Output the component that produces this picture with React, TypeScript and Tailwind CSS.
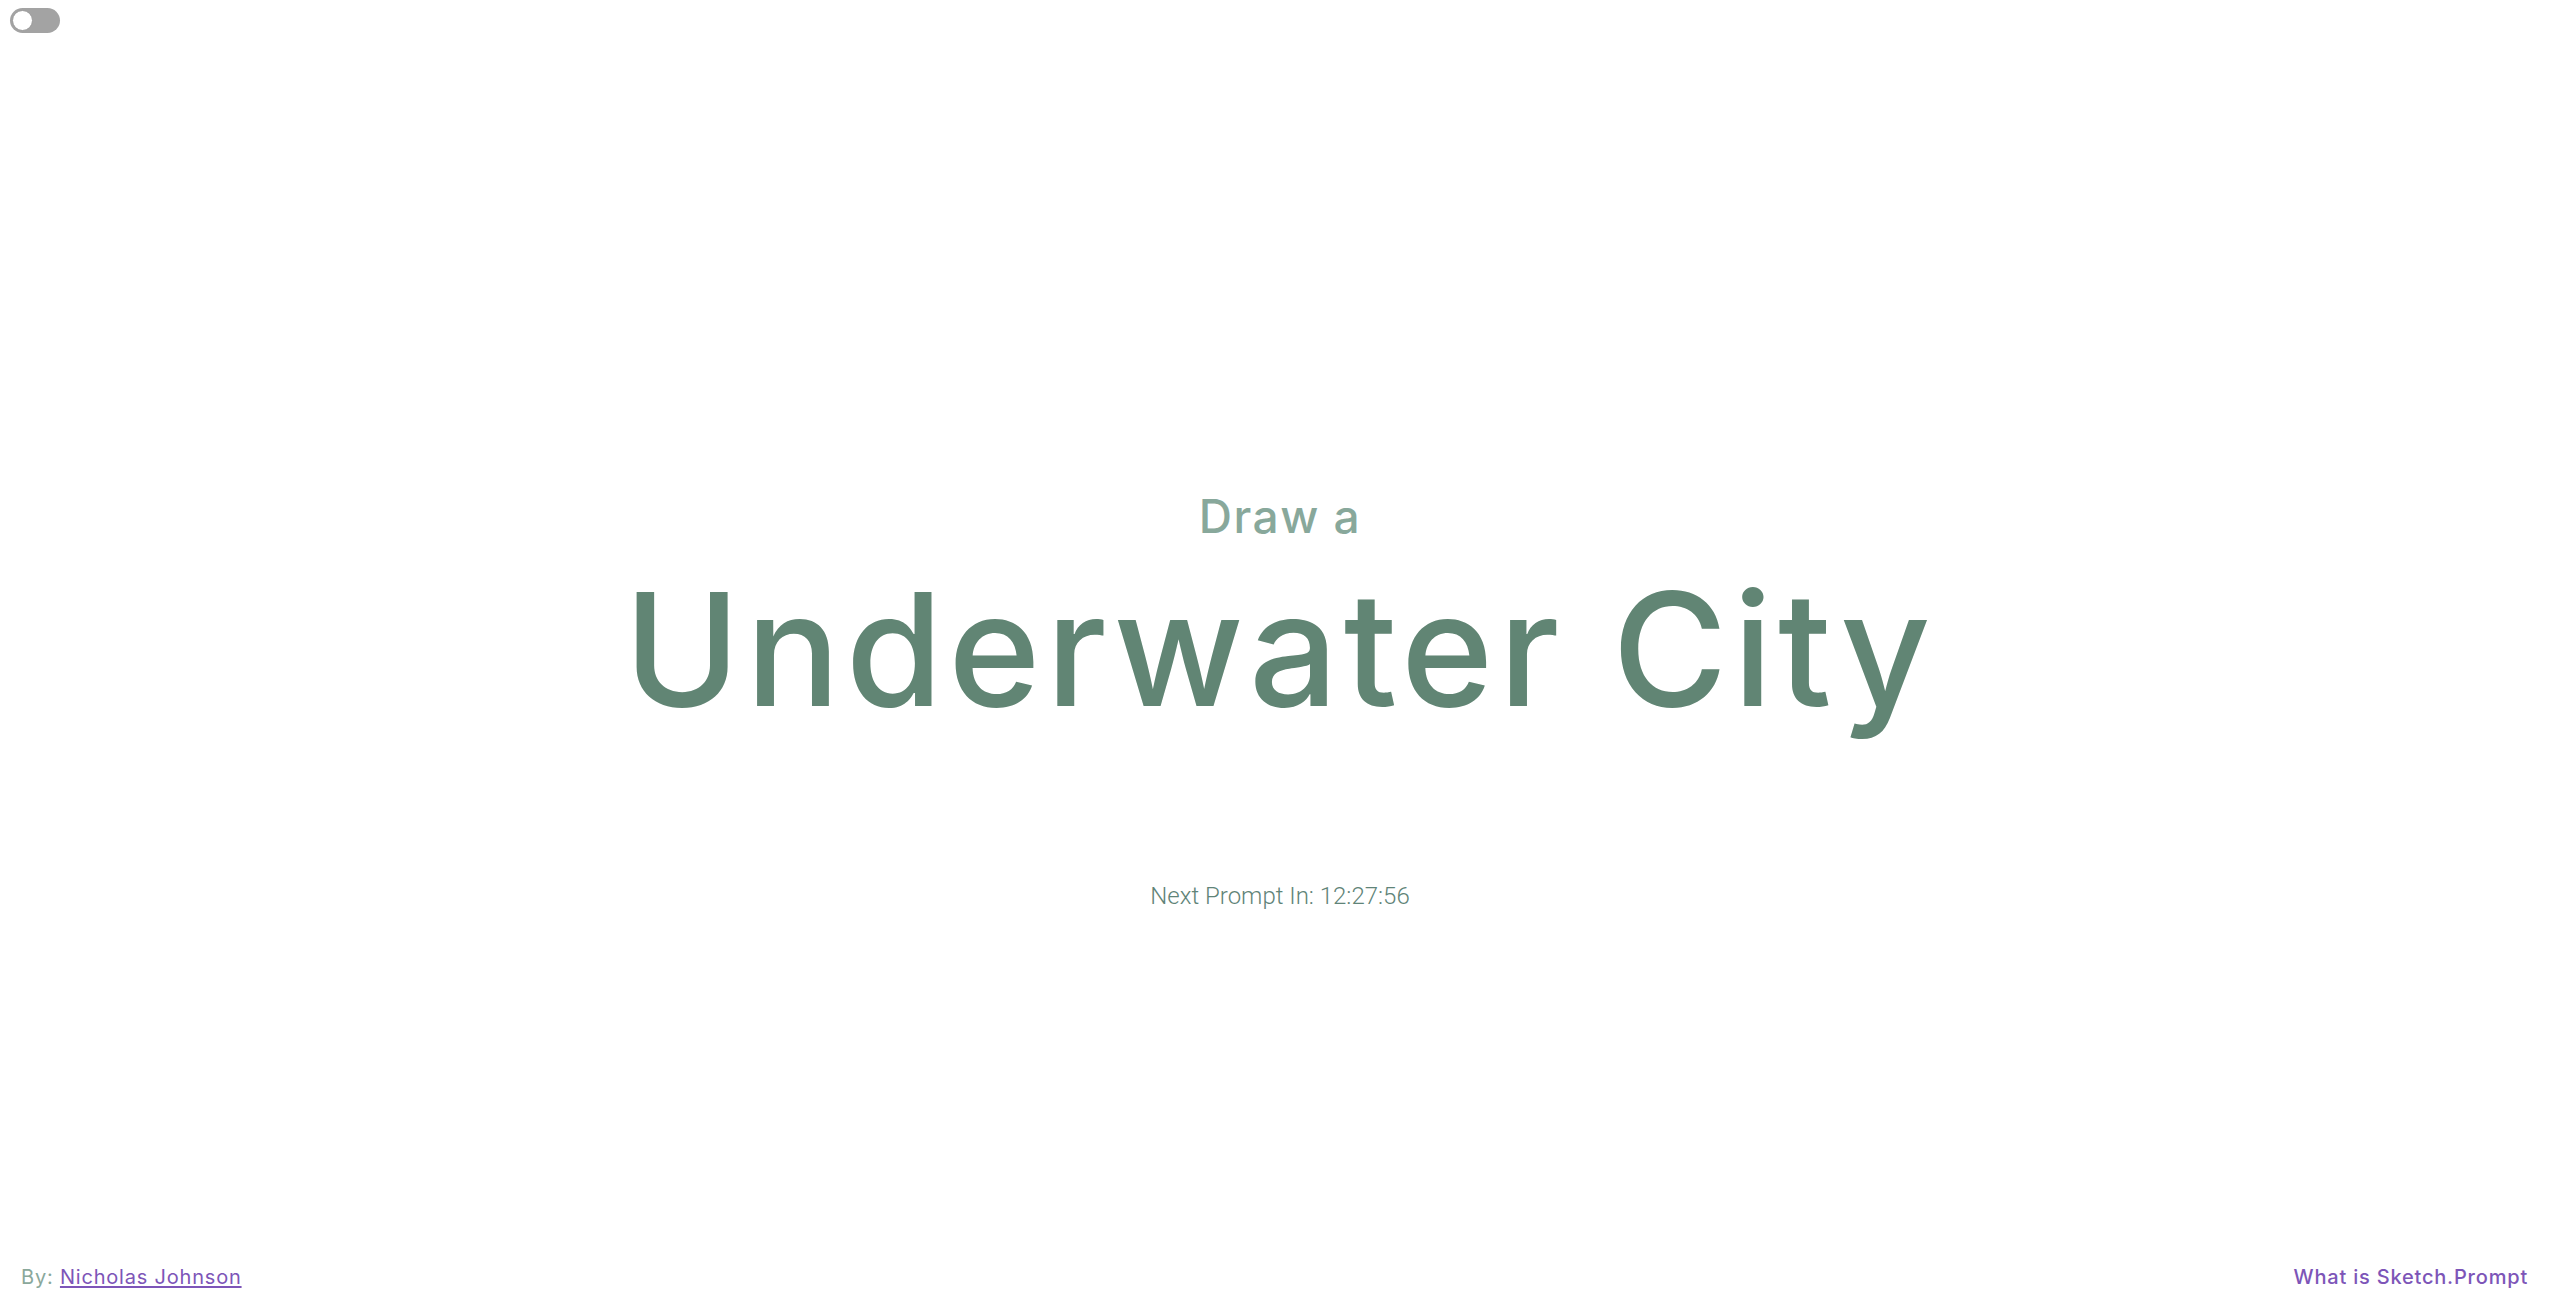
import { useState } from "react";

export default function App() {
  const [dark, setDark] = useState(false);

  return (
    <div className="flex min-h-screen flex-col bg-white font-['Inter',sans-serif]">
      <header className="px-[10px] pt-[8px]">
        <button
          onClick={() => setDark(!dark)}
          className="flex h-[25px] w-[50px] items-center rounded-full bg-[#a3a3a3] p-[2px]"
          aria-label="Toggle theme"
        >
          <span className="h-[21px] w-[21px] rounded-full border border-[#9a9a9a] bg-white" />
        </button>
      </header>

      <main className="flex flex-1 flex-col items-center pt-[460px]">
        <p className="text-[46px] font-medium leading-none tracking-[1.5px] text-[#88a89b]">Draw a</p>
        <h1 className="mt-[32px] text-[157px] font-medium leading-none tracking-[5.5px] text-[#618574]">Underwater City</h1>
        <p className="mt-[150px] font-['Roboto',sans-serif] text-[24px] font-light text-[#5f8478]">Next Prompt In: 12:27:56</p>
      </main>

      <footer className="flex items-center justify-between px-[21px] pb-[7px] text-[20px] tracking-[0.8px]">
        <p className="text-[#8aa89b]">
          By:{" "}
          <a href="#" className="text-[#7d55b8] underline underline-offset-2">Nicholas Johnson</a>
        </p>
        <a href="#" className="pr-[11px] font-medium text-[#7d55b8]">What is Sketch.Prompt</a>
      </footer>
    </div>
  );
}
